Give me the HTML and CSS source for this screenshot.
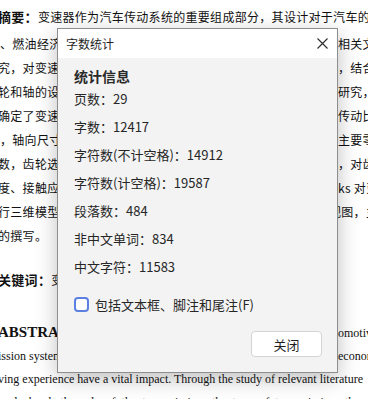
FILE: index.html
```html
<!DOCTYPE html>
<html lang="zh-CN">
<head>
<meta charset="utf-8">
<title>字数统计</title>
<link rel="stylesheet" href="styles.css">
</head>
<body>
<div class="doc">
  <div class="full first cut"><b class="kw">摘要：</b>变速器作为汽车传动系统的重要组成部分，其设计对于汽车的行驶性能</div>
  <div class="line second"><span class="l">、燃油经济性及舒适性都有</span><span class="r">相关文献资料</span></div>
  <div class="line"><span class="l cut">究，对变速器的结构</span><span class="r">，结合实际</span></div>
  <div class="line"><span class="l cut">轮和轴的设计计算</span><span class="r">研究，对</span></div>
  <div class="line"><span class="l cut">确定了变速器的</span><span class="r">传动比</span></div>
  <div class="line"><span class="l">，轴向尺寸</span><span class="r">主要零件</span></div>
  <div class="line"><span class="l cut">数，齿轮选择</span><span class="r">，对齿轮</span></div>
  <div class="line"><span class="l cut">度、接触应力</span><span class="r">ks 对变速</span></div>
  <div class="line"><span class="l cut">行三维模型</span><span class="r shift">视图，主要</span></div>
  <div class="line"><span class="l cut">的撰写。</span><span class="r"></span></div>
  <div class="line gap-kw"><span class="l cut"><b class="kw2">关键词：</b>变速器</span><span class="r"></span></div>
  <div class="line en abs-line"><span class="l cut"><b class="abs">ABSTRACT</b></span><span class="r">omotive</span></div>
  <div class="line en eline"><span class="l cut">ission system</span><span class="r">economy</span></div>
  <div class="full en eline cut">ving experience have a vital impact. Through the study of relevant literature</div>
  <div class="full en eline wide">and ahead, the role of the transmission, the type of transmission, the</div>
</div>

<div class="dialog">
  <div class="titlebar">
    <span class="title">字数统计</span>
    <span class="close"><svg width="11" height="11" viewBox="0 0 11 11"><path d="M0.5 0.5L10.5 10.5M10.5 0.5L0.5 10.5" stroke="#2b2b2b" stroke-width="1.1" fill="none"/></svg></span>
  </div>
  <div class="content">
    <div class="heading">统计信息</div>
    <ul class="stats">
      <li>页数：29</li>
      <li>字数：12417</li>
      <li>字符数(不计空格)：14912</li>
      <li>字符数(计空格)：19587</li>
      <li>段落数：484</li>
      <li>非中文单词：834</li>
      <li>中文字符：11583</li>
    </ul>
    <label class="option"><span class="box"></span><span>包括文本框、脚注和尾注(F)</span></label>
  </div>
  <div class="footer">
    <span class="btn">关闭</span>
  </div>
</div>
</body>
</html>
```

FILE: styles.css
```css
html, body {
  margin: 0;
  padding: 0;
}
body {
  width: 368px;
  height: 399px;
  overflow: hidden;
  background: #ffffff;
  position: relative;
}

/* background document */
.doc {
  font-family: "Noto Sans CJK SC", sans-serif;
  font-size: 12px;
  letter-spacing: 0.3px;
  color: #111111;
  padding-top: 6px;
}
.full {
  white-space: nowrap;
  height: 23px;
  line-height: 23px;
}
.first {
  height: 22px;
  line-height: 22px;
}
.second {
  margin-top: 4px;
}
.cut {
  margin-left: -2px;
}
.kw {
  font-weight: bold;
  font-size: 13px;
}
.kw2 {
  font-weight: bold;
  font-size: 13px;
}
.line {
  display: grid;
  grid-template-columns: 57px 281px 1fr;
  align-items: baseline;
  height: 24px;
  line-height: 24px;
  white-space: nowrap;
}
.l {
  overflow: hidden;
  grid-column: 1;
}
.r {
  grid-column: 3;
}
.r.shift {
  margin-left: -9px;
}
.gap-kw {
  margin-top: 20px;
}
.en {
  font-family: "Liberation Serif", serif;
  font-size: 12px;
  letter-spacing: 0;
}
.abs-line {
  margin-top: 27px;
  height: 26px;
  line-height: 26px;
}
.abs {
  font-size: 15px;
  font-weight: bold;
}
.eline {
  height: 23px;
  line-height: 23px;
}
.wide {
  word-spacing: 3px;
}

/* dialog */
.dialog {
  position: absolute;
  left: 57px;
  top: 28px;
  width: 281px;
  height: 345px;
  box-sizing: border-box;
  border: 1px solid #8e8e8e;
  background: #f3f3f3;
  box-shadow: 0 6px 20px rgba(0, 0, 0, 0.25);
  display: flex;
  flex-direction: column;
  font-family: "Noto Sans CJK SC", sans-serif;
  color: #262626;
}
.titlebar {
  height: 29px;
  background: #ffffff;
  display: flex;
  align-items: center;
  justify-content: space-between;
  padding: 0 9px 0 8px;
  font-size: 12px;
  color: #1f1f1f;
}
.close {
  display: flex;
  width: 11px;
  height: 11px;
}
.content {
  padding: 9px 16px 0;
}
.heading {
  font-size: 14px;
  font-weight: bold;
  line-height: 18px;
  color: #2a2a2a;
}
.stats {
  list-style: none;
  margin: 0;
  padding: 0;
  font-size: 13px;
}
.stats li {
  line-height: 28px;
  height: 28px;
}
.option {
  margin-top: 13px;
  height: 20px;
  display: flex;
  align-items: center;
  gap: 6px;
  font-size: 13px;
}
.box {
  width: 15px;
  height: 15px;
  box-sizing: border-box;
  border: 2px solid #5b80e0;
  border-radius: 4px;
  background: #ffffff;
}
.footer {
  margin-top: auto;
  display: flex;
  justify-content: flex-end;
  padding: 0 15px 15px;
}
.btn {
  width: 71px;
  height: 26px;
  box-sizing: border-box;
  border: 1px solid #d4d4d4;
  border-radius: 4px;
  background: #ffffff;
  display: flex;
  align-items: center;
  justify-content: center;
  font-size: 13px;
  color: #1f1f1f;
}
```
